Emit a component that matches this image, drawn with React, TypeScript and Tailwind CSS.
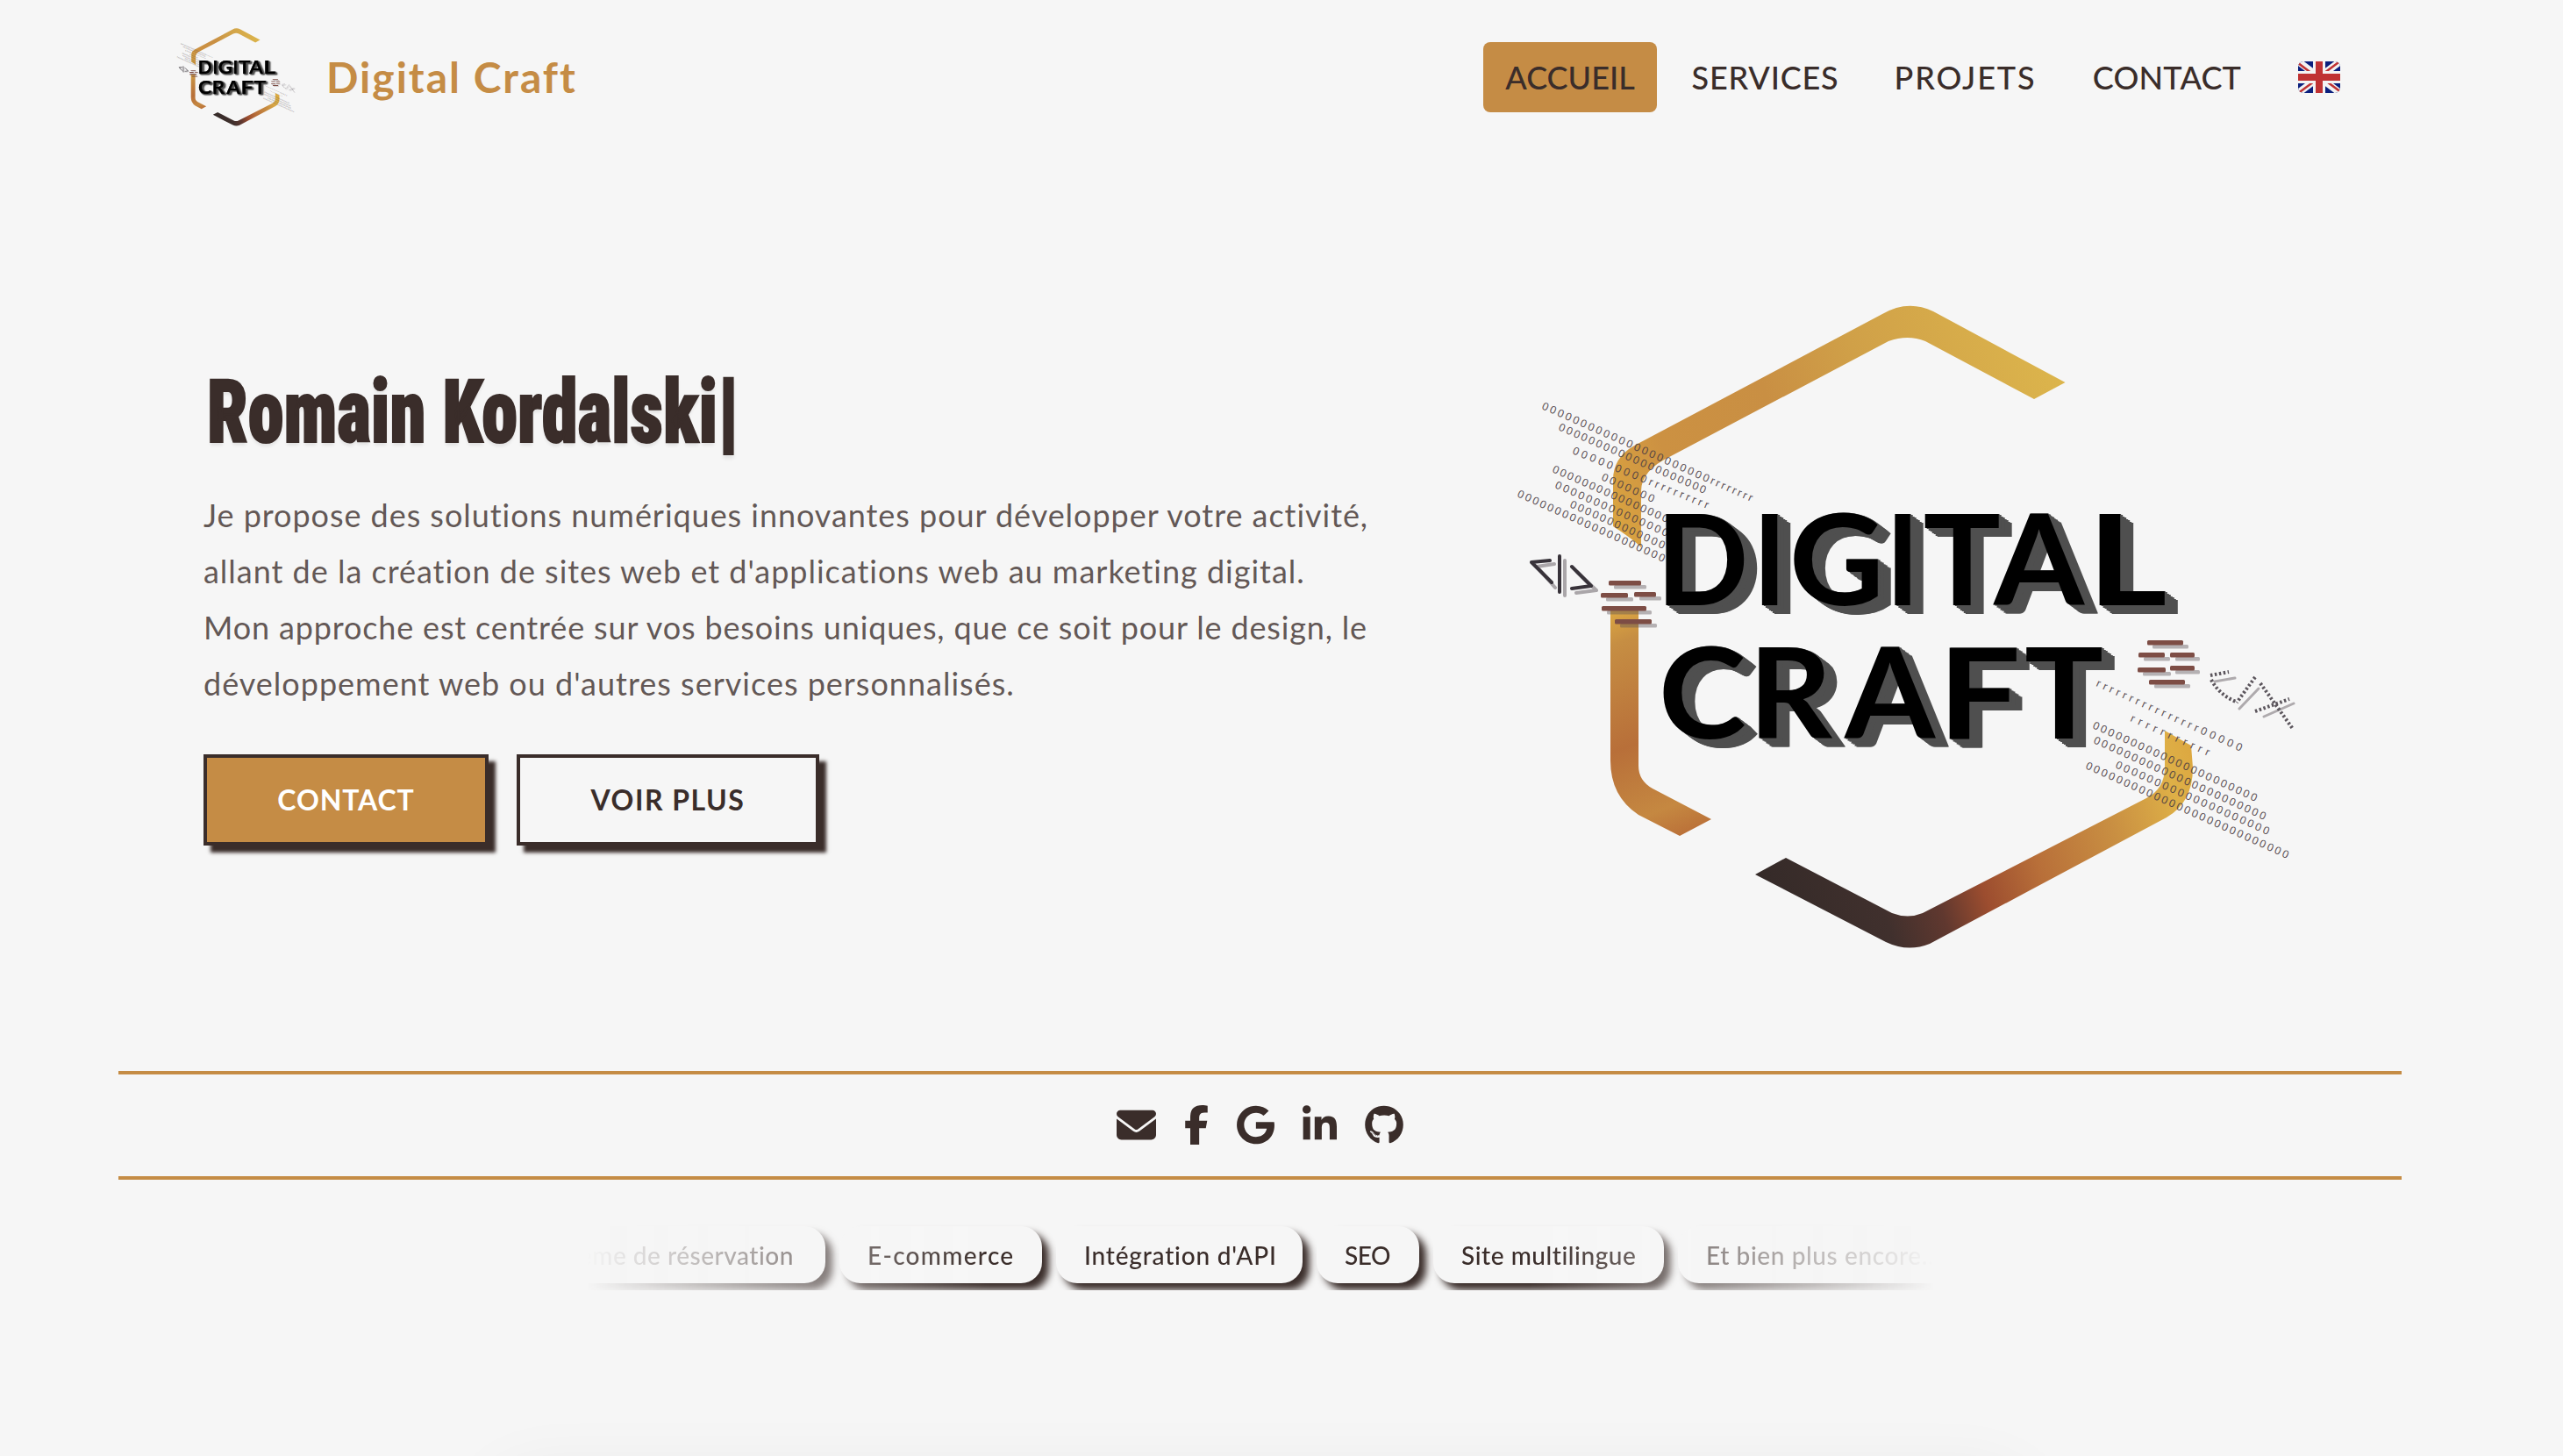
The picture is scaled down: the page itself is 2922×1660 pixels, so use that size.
import { FaEnvelope, FaFacebookF, FaGoogle, FaLinkedinIn, FaGithub } from 'react-icons/fa6';

type Glyph = { ch: string; x: number; w: number; l: number; r: number };

const WORD_TOP: Glyph[] = [
  { ch: 'D', x: 1899, w: 90, l: 11, r: 104 },
  { ch: 'I', x: 2008.5, w: 18, l: 11, r: 31 },
  { ch: 'G', x: 2045, w: 96, l: 5, r: 97 },
  { ch: 'I', x: 2160, w: 18, l: 11, r: 31 },
  { ch: 'T', x: 2194.6, w: 84.4, l: 2, r: 84 },
  { ch: 'A', x: 2272, w: 106, l: -1, r: 101 },
  { ch: 'L', x: 2393, w: 76, l: 11, r: 73 },
];
const WORD_BOTTOM: Glyph[] = [
  { ch: 'C', x: 1896, w: 93, l: 5, r: 93 },
  { ch: 'R', x: 2005, w: 85, l: 11, r: 93 },
  { ch: 'A', x: 2102, w: 106, l: -1, r: 101 },
  { ch: 'F', x: 2222, w: 77, l: 11, r: 77 },
  { ch: 'T', x: 2310, w: 86, l: 2, r: 84 },
];

function Word({ glyphs, y }: { glyphs: Glyph[]; y: number }) {
  return (
    <g
      fill="#000"
      className="font-['Lato',sans-serif] text-[143px] font-bold [filter:drop-shadow(1px_0.8px_0_#4f4f4f)_drop-shadow(2px_1.6px_0_#4f4f4f)_drop-shadow(4px_3.2px_0_#4f4f4f)_drop-shadow(8px_6.4px_0_#4f4f4f)]"
    >
      {glyphs.map((g, i) => {
        const s = g.w / (g.r - g.l);
        return (
          <text key={i} transform={`translate(${g.x - g.l * s} ${y}) scale(${s} 1)`}>
            {g.ch}
          </text>
        );
      })}
    </g>
  );
}

type Row = { from: [number, number]; to: [number, number]; text: string };
const z = (n: number) => '0'.repeat(n);
const r = (n: number) => 'r'.repeat(n);

const CODE_ROWS: Row[] = [
  { from: [1757, 466], to: [1996, 572], text: z(22) + r(8) },
  { from: [1776, 490], to: [1943, 563], text: z(20) },
  { from: [1792, 517], to: [1946, 580], text: z(9) + r(10) },
  { from: [1825, 547], to: [1884, 573], text: z(7) },
  { from: [1769, 538], to: [1900, 596], text: z(16) },
  { from: [1772, 556], to: [1900, 612], text: z(15) },
  { from: [1789, 578], to: [1896, 626], text: z(13) },
  { from: [1729, 566], to: [1896, 641], text: z(20) },
  { from: [2389, 782], to: [2554, 857], text: r(16) + z(5) },
  { from: [2428, 822], to: [2517, 862], text: r(11) },
  { from: [2385, 830], to: [2571, 914], text: z(22) },
  { from: [2386, 847], to: [2581, 935], text: z(23) },
  { from: [2411, 875], to: [2585, 952], text: z(20) },
  { from: [2377, 876], to: [2607, 979], text: z(27) },
];

const BARS: [number, number, number][] = [
  [1834, 662, 37], [1825, 676, 31], [1863, 675, 25], [1826, 691, 51], [1841, 706, 42],
  [2448, 730, 41], [2438, 744, 30], [2474, 744, 28], [2437, 761, 32], [2474, 759, 28], [2450, 775, 41],
];

function Mark({ id, className }: { id: string; className: string }) {
  return (
    <svg viewBox="1720 340 920 750" className={className} role="img" aria-label="Digital Craft">
      <defs>
        <linearGradient id={`${id}-top`} gradientUnits="userSpaceOnUse" x1="1838" y1="610" x2="2354" y2="430">
          <stop offset="0" stopColor="#dba540" />
          <stop offset="0.16" stopColor="#cc9142" />
          <stop offset="0.4" stopColor="#c98f43" />
          <stop offset="0.6" stopColor="#d0a048" />
          <stop offset="1" stopColor="#dcb54c" />
        </linearGradient>
        <linearGradient id={`${id}-left`} gradientUnits="userSpaceOnUse" x1="1836" y1="692" x2="1936" y2="952">
          <stop offset="0" stopColor="#dfaa42" />
          <stop offset="0.15" stopColor="#c68e43" />
          <stop offset="0.56" stopColor="#b86f39" />
          <stop offset="0.85" stopColor="#c58841" />
          <stop offset="1" stopColor="#b96d37" />
        </linearGradient>
        <linearGradient id={`${id}-bottom`} gradientUnits="userSpaceOnUse" x1="2001" y1="1010" x2="2500" y2="850">
          <stop offset="0" stopColor="#342a28" />
          <stop offset="0.25" stopColor="#40302d" />
          <stop offset="0.37" stopColor="#60382f" />
          <stop offset="0.47" stopColor="#9c4d2f" />
          <stop offset="0.6" stopColor="#b86f39" />
          <stop offset="0.78" stopColor="#c98f42" />
          <stop offset="0.93" stopColor="#deb047" />
          <stop offset="1" stopColor="#dca740" />
        </linearGradient>
      </defs>

      <path
        fill={`url(#${id}-top)`}
        d="M1839 600V547Q1839 520 1867 506L2146 358Q2175 341 2204 355L2354.500 436L2319 455L2195 389Q2175 381 2153 389L1905 520Q1871 536 1871 560V624Q1862 615 1839 600Z"
      />
      <path
        fill={`url(#${id}-left)`}
        d="M1836 692H1868V873Q1868 890 1884 899L1951 934L1915 953L1868 929Q1836 908 1836 867Z"
      />
      <path
        fill={`url(#${id}-bottom)`}
        d="M2001 997L2036 978L2157 1041Q2175 1048 2192 1041L2447 910Q2469 899 2468 872V833L2498 850L2500 875Q2500 915 2470 932L2200 1076Q2175 1086 2150 1074Z"
      />

      <g className="font-['Liberation_Sans',sans-serif] text-[12.5px]" fill="#4a3c44" fillOpacity="0.9">
        {CODE_ROWS.map((row, i) => {
          const dx = row.to[0] - row.from[0];
          const dy = row.to[1] - row.from[1];
          return (
            <text
              key={i}
              transform={`translate(${row.from[0]} ${row.from[1]}) rotate(${(Math.atan2(dy, dx) * 180) / Math.PI})`}
              textLength={Math.hypot(dx, dy)}
            >
              {row.text}
            </text>
          );
        })}
      </g>

      {BARS.map(([x, y, w], i) => (
        <rect key={i} x={x + 6} y={y + 5} width={w} height="4.500" rx="1.500" fill="#5b5056" fillOpacity="0.42" />
      ))}
      {BARS.map(([x, y, w], i) => (
        <rect key={i} x={x} y={y} width={w} height="5.500" rx="1.500" fill="#7d4d45" />
      ))}

      <g fill="none" strokeWidth="4" strokeLinecap="round" strokeLinejoin="round">
        <path stroke="#aaa6a9" d="M1772 643L1752 646L1773 670M1784 639V679M1798 652L1820 673L1797 676" />
        <path stroke="#38333a" d="M1767 639L1746 641L1769 664M1778 634V675M1792 646L1814 668L1792 671" />
        <path stroke="#aeaaad" strokeWidth="3" d="M2525 777L2548 773M2575 785L2553 808M2581 817L2615 802" />
        <path
          stroke="#5b555c"
          strokeWidth="4"
          strokeLinecap="butt"
          strokeDasharray="2.500 2.500"
          d="M2520 770L2541 766M2521 775Q2530 792 2549 800M2571 772L2550 801M2577 779L2614 831M2571 811L2610 797"
        />
      </g>

      <Word glyphs={WORD_TOP} y={690} />
      <Word glyphs={WORD_BOTTOM} y={842} />
    </svg>
  );
}

function UkFlag() {
  return (
    <svg viewBox="0 0 48 36" className="h-9 w-12" role="img" aria-label="English">
      <clipPath id="flag-round">
        <rect width="48" height="36" rx="6" />
      </clipPath>
      <g clipPath="url(#flag-round)">
        <rect width="48" height="36" fill="#0b1f7d" />
        <path d="M0 0L48 36M48 0L0 36" stroke="#f3f3f3" strokeWidth="8" />
        <path d="M-1 1L22 18.500M49 -1L26 16M26 18L49 35M-1 37L22 20" stroke="#c03233" strokeWidth="2.600" />
        <path d="M24 0V36M0 18H48" stroke="#f3f3f3" strokeWidth="14" />
        <path d="M24 0V36M0 18H48" stroke="#c03233" strokeWidth="8" />
      </g>
    </svg>
  );
}

const CHIPS = [
  { label: 'Système de réservation', className: 'w-[366px] tracking-[0.5px]' },
  { label: 'E-commerce', className: 'w-[231px] tracking-[1.3px]' },
  { label: "Intégration d'API", className: 'w-[281px] tracking-[0.8px]' },
  { label: 'SEO', className: 'w-[117px] -tracking-[0.5px]' },
  { label: 'Site multilingue', className: 'w-[263px] tracking-[0.55px]' },
  { label: 'Et bien plus encore...', className: 'w-[340px] tracking-[0.6px]' },
];

export default function App() {
  return (
    <div className="flex h-[1660px] w-[2922px] flex-col overflow-hidden bg-[#f6f6f6] font-['Lato',sans-serif] text-[#3a2d2a]">
      <header className="flex h-44 shrink-0 items-center justify-between pr-[230px] pl-[200px]">
        <a className="flex items-center">
          <Mark id="brand" className="h-[114px] w-[140px]" />
          <span className="ml-8 text-[48px] leading-none font-bold tracking-[2px] text-[#c58c45]">Digital Craft</span>
        </a>
        <nav className="flex items-center gap-4 text-[36px] leading-none font-medium">
          <a className="flex h-20 w-[198px] items-center justify-center rounded-lg bg-[#c58c45]">ACCUEIL</a>
          <a className="flex h-20 w-[215px] items-center justify-center tracking-[0.8px]">SERVICES</a>
          <a className="flex h-20 w-[209px] items-center justify-center tracking-[1.9px]">PROJETS</a>
          <a className="flex h-20 w-[219px] items-center justify-center tracking-[0.2px]">CONTACT</a>
          <a className="flex h-20 w-24 items-center justify-center">
            <UkFlag />
          </a>
        </nav>
      </header>

      <main className="flex h-[1045px] shrink-0 pl-[232px]">
        <section className="w-[1488px] shrink-0 pt-[245px]">
          <h1 className="flex h-24 items-center pl-1 font-['Roboto',sans-serif] text-[101px] leading-none font-black whitespace-nowrap [font-stretch:75%] [text-shadow:0_4px_4px_rgba(0,0,0,0.08)]">
            <span className="w-[577px] origin-left scale-x-[0.817] [-webkit-text-stroke:2px_#3a2d2a]">Romain Kordalski</span>
            <span className="origin-left scale-x-[1.28] text-[106px]">|</span>
          </h1>
          <p className="mt-[38px] text-[36px] leading-[64px] whitespace-nowrap text-[#3a2d2a]/80">
            <span className="block tracking-[0.95px]">Je propose des solutions numériques innovantes pour développer votre activité,</span>
            <span className="block tracking-[0.98px]">allant de la création de sites web et d'applications web au marketing digital.</span>
            <span className="block tracking-[0.84px]">Mon approche est centrée sur vos besoins uniques, que ce soit pour le design, le</span>
            <span className="block tracking-[1px]">développement web ou d'autres services personnalisés.</span>
          </p>
          <div className="mt-[49px] flex gap-8 text-[32px] leading-none font-bold">
            <a className="flex h-[104px] w-[325px] items-center justify-center border-4 border-[#3a2d2a] bg-[#c58c45] tracking-[0.9px] text-white shadow-[8px_8px_4px_#3a2d2a]">
              CONTACT
            </a>
            <a className="flex h-[104px] w-[345px] items-center justify-center border-4 border-[#3a2d2a] bg-[#f6f6f6] tracking-[1.5px] shadow-[8px_8px_4px_#3a2d2a]">
              VOIR PLUS
            </a>
          </div>
        </section>
        <Mark id="hero" className="mt-[164px] h-[750px] w-[920px] shrink-0" />
      </main>

      <div className="mr-[184px] ml-[135px] flex h-[124px] shrink-0 items-center justify-center gap-8 border-y-4 border-[#c58c45] pb-0.5">
        <FaEnvelope className="h-[45px] w-[45px]" />
        <FaFacebookF className="h-[45px] w-[28px]" />
        <FaGoogle className="h-[45px] w-[43px]" />
        <FaLinkedinIn className="h-[45px] w-[39px]" />
        <FaGithub className="h-[45px] w-[44px]" />
      </div>

      <div className="mt-[45px] ml-[669px] flex h-[81px] w-[1536px] shrink-0 justify-end overflow-hidden [mask-image:linear-gradient(to_right,transparent,black_30%,black_70%,transparent)]">
        <div className="-mr-[48px] flex shrink-0 gap-4 pt-2 text-[28px] leading-none font-medium">
          {CHIPS.map((c) => (
            <span
              key={c.label}
              className={`flex h-[65px] shrink-0 items-center rounded-3xl bg-[#f6f6f6] pl-8 whitespace-nowrap shadow-[8px_8px_8px_#3a2d2a] ${c.className}`}
            >
              {c.label}
            </span>
          ))}
        </div>
      </div>

      <div className="mt-[209px] ml-[560px] h-40 w-[1752px] shrink-0 rounded-[48px] bg-[#f6f6f6] shadow-[0_0_80px_rgba(0,0,0,0.06)]" />
    </div>
  );
}
